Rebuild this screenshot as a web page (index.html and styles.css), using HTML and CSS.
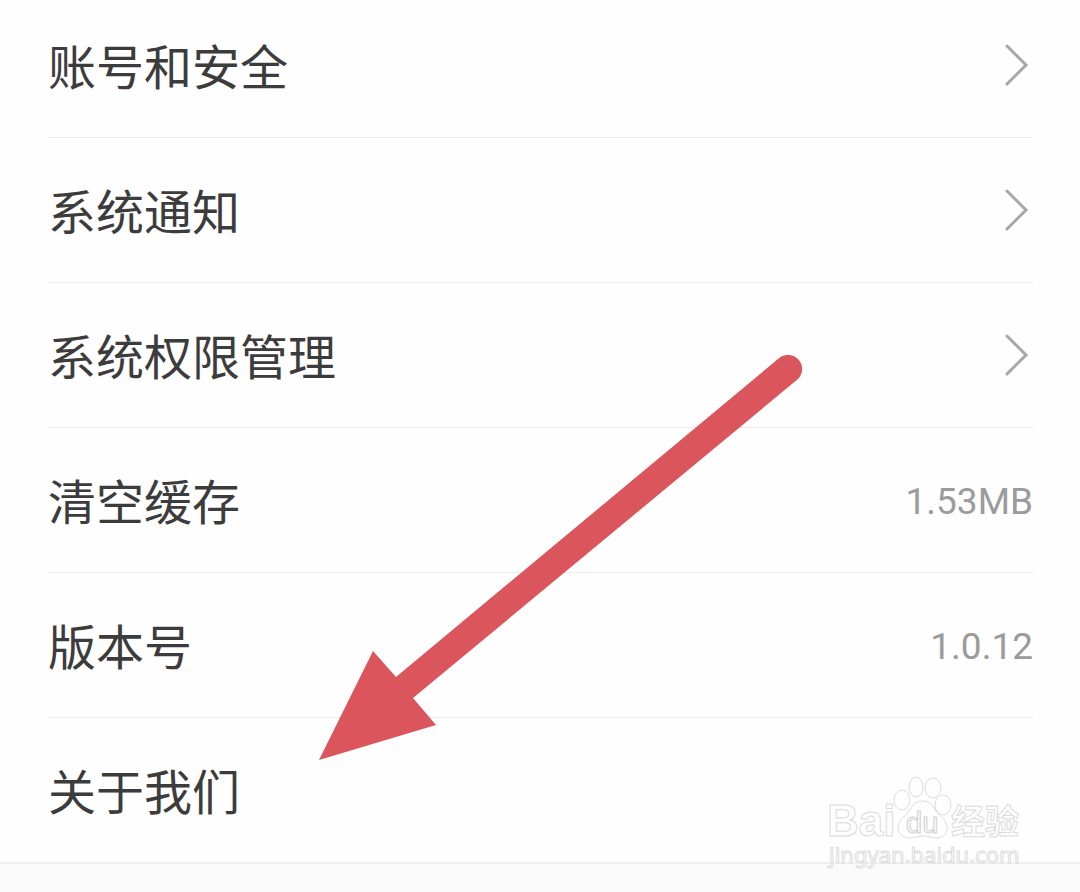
FILE: index.html
```html
<!DOCTYPE html>
<html lang="zh-CN">
<head>
<meta charset="utf-8">
<meta name="viewport" content="width=device-width, initial-scale=1">
<title>设置</title>
<link rel="stylesheet" href="styles.css">
</head>
<body>
<main class="settings">
  <ul class="list">
    <li class="item"><a class="row" href="#account"><span>账号和安全</span><svg class="chevron" viewBox="0 0 28 44" aria-hidden="true"><path d="M4 4 23 23 4 42"/></svg></a></li>
    <li class="item"><a class="row" href="#notice"><span>系统通知</span><svg class="chevron" viewBox="0 0 28 44" aria-hidden="true"><path d="M4 4 23 23 4 42"/></svg></a></li>
    <li class="item"><a class="row" href="#permissions"><span>系统权限管理</span><svg class="chevron" viewBox="0 0 28 44" aria-hidden="true"><path d="M4 4 23 23 4 42"/></svg></a></li>
    <li class="item"><button class="row" type="button"><span>清空缓存</span><span class="value">1.53MB</span></button></li>
    <li class="item"><div class="row"><span>版本号</span><span class="value">1.0.12</span></div></li>
    <li class="item"><a class="row" href="#about"><span>关于我们</span></a></li>
  </ul>
  <svg class="arrow" viewBox="0 0 484 406" aria-hidden="true">
    <path d="M0 405 54 296 77 322 459 4A13 13 0 0 1 479 24L94 343 117 370Z"/>
  </svg>
  <svg class="watermark" viewBox="0 0 210 110" aria-hidden="true">
    <text class="brand" x="1" y="64">Bai</text>
    <ellipse cx="76" cy="28" rx="8" ry="10"/>
    <ellipse cx="90" cy="15" rx="7" ry="10"/>
    <ellipse cx="107" cy="16" rx="8" ry="10"/>
    <ellipse cx="117" cy="33" rx="8" ry="10"/>
    <path d="M97 29C90 29 87 32 84 38 81 43 75 46 73 51 70 60 75 66 83 66 89 66 91 64 97 64 103 64 106 66 112 66 120 65 123 58 120 51 118 46 112 43 109 38 106 32 103 29 97 29Z"/>
    <text class="paw-text" x="80" y="61">du</text>
    <text class="cjk" x="125" y="62">经验</text>
    <text class="site" x="3" y="91">jingyan.baidu.com</text>
  </svg>
</main>
</body>
</html>
```
FILE: styles.css
```css
* {
  box-sizing: border-box;
}

body {
  margin: 0;
  min-height: 100vh;
  background: #fafafa;
  color: #3c3c3c;
  font-family: "Noto Sans CJK SC", sans-serif;
}

.settings {
  position: relative;
}

.list {
  margin: 0;
  padding: 0 0 1px;
  list-style: none;
  background: #fefefe;
  border-bottom: 2px solid #efefef;
}

.item {
  padding: 0 47px 0 48px;
}

.row {
  display: flex;
  align-items: center;
  justify-content: space-between;
  width: 100%;
  padding: 35px 0 37px;
  border: 0;
  border-bottom: 1px solid #ebebeb;
  background: none;
  color: inherit;
  font: inherit;
  font-size: 48px;
  line-height: 72px;
  text-align: left;
  text-decoration: none;
}

.item:first-child .row {
  padding-top: 28px;
}

.item:last-child .row {
  padding-bottom: 36px;
  border-bottom: 0;
}

.value {
  padding-top: 6px;
  color: #9b9b9b;
  font-family: Roboto, sans-serif;
  font-size: 37px;
  line-height: 66px;
}

.chevron {
  width: 28px;
  height: 44px;
  margin-right: 2px;
  fill: none;
  stroke: #a6a6a6;
  stroke-width: 3;
  stroke-linecap: round;
}

.arrow {
  position: absolute;
  top: 355px;
  left: 319px;
  width: 484px;
  height: 406px;
  fill: #da565c;
  pointer-events: none;
}

.watermark {
  position: absolute;
  top: 772px;
  right: 44px;
  width: 210px;
  height: 110px;
  fill: #fefefe;
  stroke: #dcdcdc;
  stroke-width: 1;
  pointer-events: none;
}

.brand {
  font: bold 44px "Liberation Sans", sans-serif;
}

.paw-text {
  font: 29px "Liberation Sans", sans-serif;
  stroke: #cfcfcf;
}

.cjk {
  font: bold 34px "Noto Sans CJK SC", sans-serif;
}

.site {
  font: 22px "Noto Sans", sans-serif;
}
```
